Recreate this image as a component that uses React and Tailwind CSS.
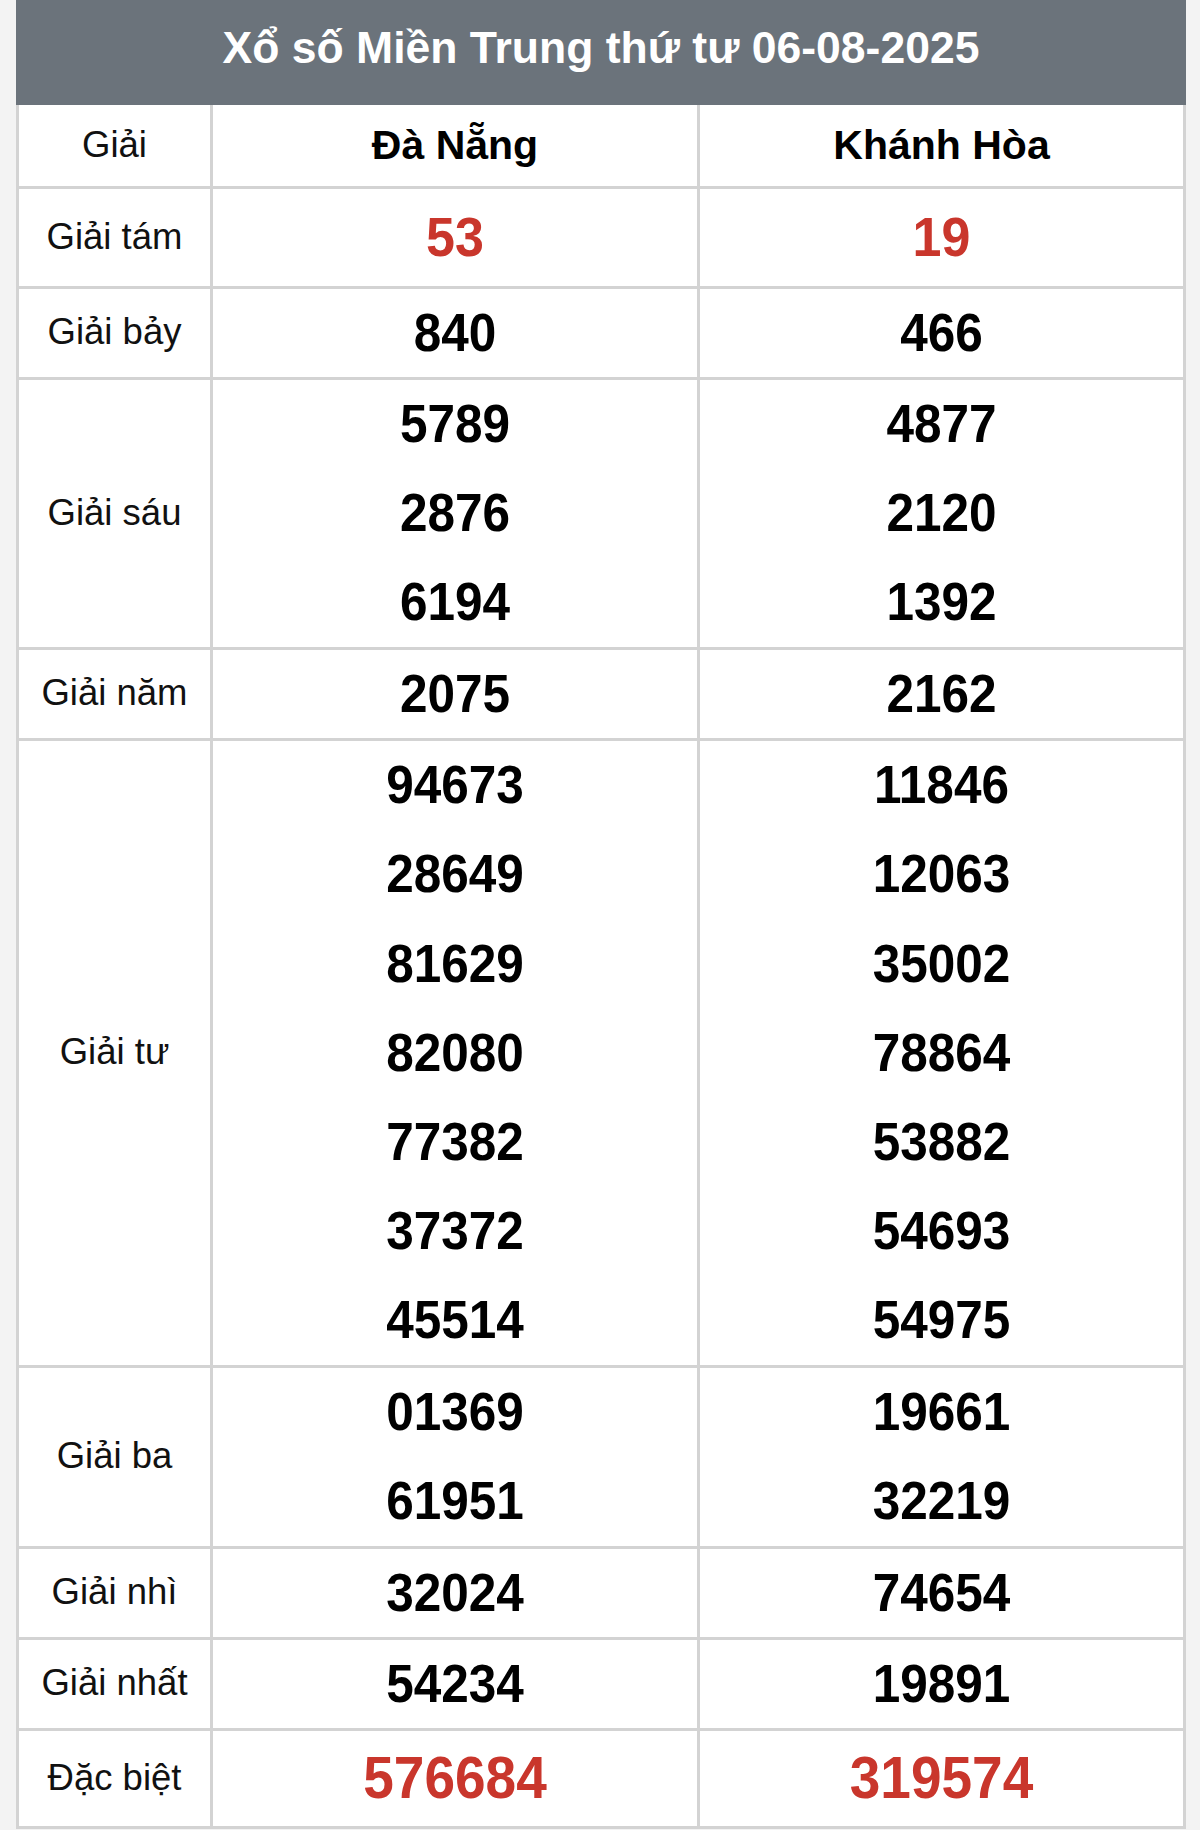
import React from 'react';

const rows = [
  { label: 'Giải tám', h: 'h-[100px]', dn: ['53'], kh: ['19'], kind: 'red' },
  { label: 'Giải bảy', h: 'h-[91px]', dn: ['840'], kh: ['466'] },
  { label: 'Giải sáu', h: 'h-[270px]', dn: ['5789', '2876', '6194'], kh: ['4877', '2120', '1392'] },
  { label: 'Giải năm', h: 'h-[91px]', dn: ['2075'], kh: ['2162'] },
  {
    label: 'Giải tư',
    h: 'h-[627px]',
    dn: ['94673', '28649', '81629', '82080', '77382', '37372', '45514'],
    kh: ['11846', '12063', '35002', '78864', '53882', '54693', '54975'],
  },
  { label: 'Giải ba', h: 'h-[181px]', dn: ['01369', '61951'], kh: ['19661', '32219'] },
  { label: 'Giải nhì', h: 'h-[91px]', dn: ['32024'], kh: ['74654'] },
  { label: 'Giải nhất', h: 'h-[91px]', dn: ['54234'], kh: ['19891'] },
  { label: 'Đặc biệt', h: 'h-[98px]', dn: ['576684'], kh: ['319574'], kind: 'special' },
];

const numClass = (kind) => {
  if (kind === 'red') return 'text-[52px] text-[#c9362c]';
  if (kind === 'special') return 'text-[55px] text-[#c9362c]';
  return 'text-[49.5px] text-black';
};

const NumberCell = ({ values, h, kind }) => (
  <td className={`border-[3px] border-[#d3d3d3] p-0 ${h}`}>
    <div className="flex flex-col h-full">
      {values.map((v) => (
        <div key={v} className="flex-1 flex items-center justify-center">
          <span className={`font-bold leading-none inline-block scale-y-108 ${numClass(kind)}`}>{v}</span>
        </div>
      ))}
    </div>
  </td>
);

export default function App() {
  return (
    <div className="min-h-[1830px] bg-[#f3f3f3] pl-[16px] pr-[14px]" style={{ fontFamily: '"Liberation Sans", Arial, sans-serif' }}>
      <div className="bg-white">
        <div className="h-[105px] bg-[#6b737b] flex items-center justify-center pb-[8px]">
          <h1 className="text-white font-bold text-[44.5px] leading-none">Xổ số Miền Trung thứ tư 06-08-2025</h1>
        </div>
        <table className="w-full table-fixed border-collapse">
          <colgroup>
            <col className="w-[194px]" />
            <col className="w-[487px]" />
            <col />
          </colgroup>
          <thead>
            <tr>
              <th className="h-[82px] border-[3px] border-t-0 border-[#d3d3d3] font-normal text-[36.5px] text-[#111]">Giải</th>
              <th className="h-[82px] border-[3px] border-t-0 border-[#d3d3d3] font-bold text-[41px] text-black">Đà Nẵng</th>
              <th className="h-[82px] border-[3px] border-t-0 border-[#d3d3d3] font-bold text-[41px] text-black">Khánh Hòa</th>
            </tr>
          </thead>
          <tbody>
            {rows.map((r) => (
              <tr key={r.label}>
                <td className={`border-[3px] border-[#d3d3d3] text-center text-[36.5px] text-[#111] ${r.h}`}>{r.label}</td>
                <NumberCell values={r.dn} h={r.h} kind={r.kind} />
                <NumberCell values={r.kh} h={r.h} kind={r.kind} />
              </tr>
            ))}
          </tbody>
        </table>
      </div>
    </div>
  );
}
